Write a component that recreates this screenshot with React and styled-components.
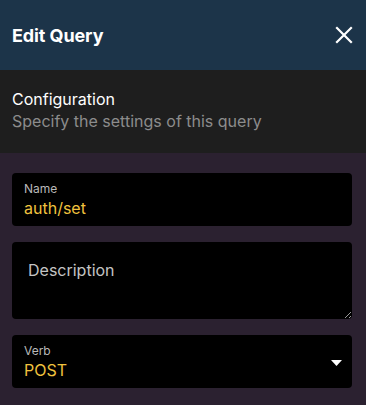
import React from "react";
import styled, { createGlobalStyle } from "styled-components";

const GlobalStyle = createGlobalStyle`
    html, body {
        margin: 0;
        padding: 0;
        background: #2b2130;
    }
    body {
        font-family: Inter, "Noto Sans", sans-serif;
        -webkit-font-smoothing: antialiased;
    }
`;

const Panel = styled.div`
    width: 366px;
    height: 405px;
    display: flex;
    flex-direction: column;
    overflow: hidden;
    background: #2b2130;
`;

const Header = styled.header`
    height: 70px;
    flex-shrink: 0;
    display: flex;
    align-items: center;
    justify-content: space-between;
    padding: 0 13px 0 12px;
    box-sizing: border-box;
    background: #1c3449;
    h1 {
        margin: 0;
        color: #ffffff;
        font-size: 18px;
        font-weight: 700;
        letter-spacing: -0.1px;
    }
`;

const CloseButton = styled.button`
    border: 0;
    padding: 0;
    background: transparent;
    display: flex;
    cursor: pointer;
`;

const Section = styled.div`
    height: 83px;
    flex-shrink: 0;
    box-sizing: border-box;
    padding: 18px 12px 0;
    background: #1e1e1e;
    h2 {
        margin: 0;
        color: #ffffff;
        font-size: 16px;
        font-weight: 400;
        line-height: 22px;
    }
    p {
        margin: 0;
        color: #8c8c8c;
        font-size: 16px;
        line-height: 22px;
    }
`;

const Form = styled.form`
    display: flex;
    flex-direction: column;
    gap: 16px;
    padding: 20px 14px 0 12px;
`;

const Field = styled.label`
    position: relative;
    height: 53px;
    box-sizing: border-box;
    display: flex;
    flex-direction: column;
    justify-content: center;
    padding: 0 12px;
    background: #000000;
    border-radius: 4px;
    span {
        color: #b9b9b9;
        font-size: 12px;
        line-height: 16px;
    }
    strong {
        color: #f0c23e;
        font-size: 16px;
        font-weight: 400;
        line-height: 22px;
    }
`;

const TextArea = styled.textarea`
    height: 77px;
    box-sizing: border-box;
    padding: 18px 16px;
    border: 0;
    border-radius: 4px;
    background: #000000;
    color: #ffffff;
    font-family: Inter, "Noto Sans", sans-serif;
    font-size: 16px;
    line-height: 20px;
    resize: vertical;
    outline: none;
    color-scheme: dark;
    &::placeholder {
        color: #c4c4c4;
    }
`;

const Caret = styled.svg`
    position: absolute;
    right: 10px;
    top: 25px;
`;

const App = () => {
    return (
        <>
            <GlobalStyle />
            <Panel>
                <Header>
                    <h1>Edit Query</h1>
                    <CloseButton type="button" aria-label="Close">
                        <svg width="18" height="18" viewBox="0 0 18 18">
                            <path d="M2 2L16 16M16 2L2 16" stroke="#ffffff" strokeWidth="2.2" strokeLinecap="square" />
                        </svg>
                    </CloseButton>
                </Header>
                <Section>
                    <h2>Configuration</h2>
                    <p>Specify the settings of this query</p>
                </Section>
                <Form>
                    <Field>
                        <span>Name</span>
                        <strong>auth/set</strong>
                    </Field>
                    <TextArea placeholder="Description" />
                    <Field>
                        <span>Verb</span>
                        <strong>POST</strong>
                        <Caret width="11" height="6" viewBox="0 0 11 6">
                            <path d="M0 0H11L5.5 6Z" fill="#ffffff" />
                        </Caret>
                    </Field>
                </Form>
            </Panel>
        </>
    );
};

export default App;
